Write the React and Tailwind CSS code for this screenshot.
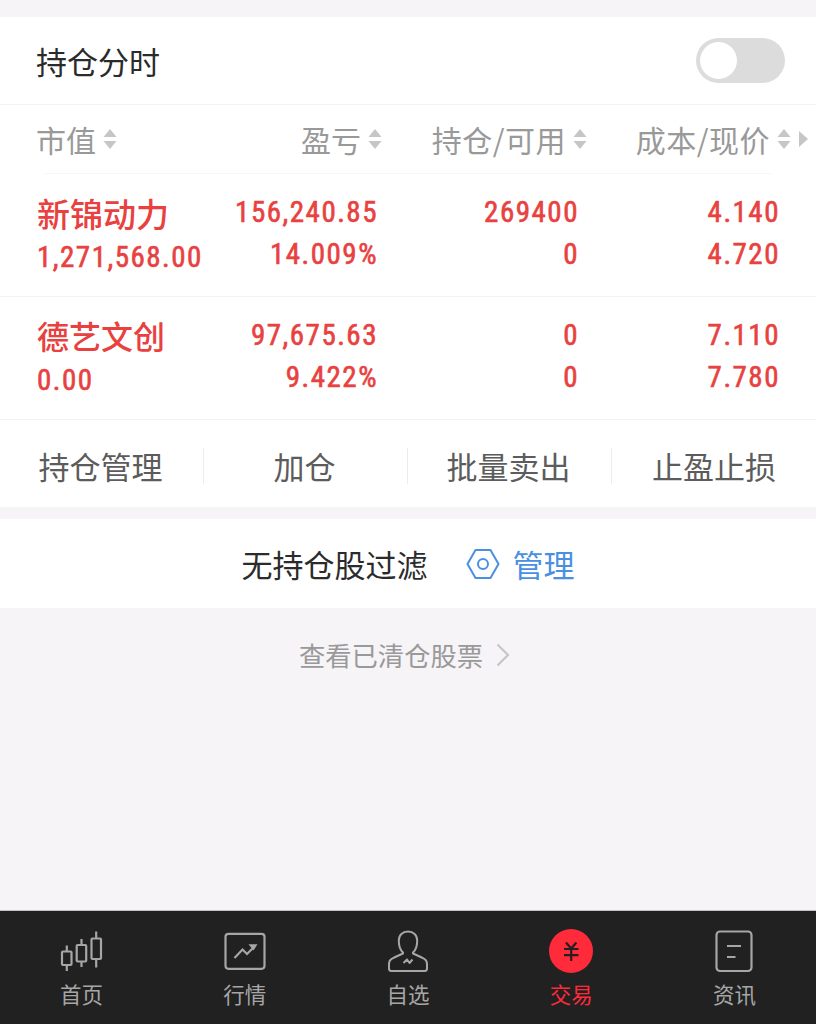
import React, { useState } from 'react';

const positions = [
  {
    name: '新锦动力',
    nameClass: 'text-[33px]',
    marketValue: '1,271,568.00',
    profit: '156,240.85',
    profitRate: '14.009%',
    held: '269400',
    available: '0',
    cost: '4.140',
    price: '4.720',
  },
  {
    name: '德艺文创',
    nameClass: 'text-[32px]',
    marketValue: '0.00',
    profit: '97,675.63',
    profitRate: '9.422%',
    held: '0',
    available: '0',
    cost: '7.110',
    price: '7.780',
  },
];

const actions = ['持仓管理', '加仓', '批量卖出', '止盈止损'];

const SortIcon = () => (
  <svg className="h-5 w-[14px] shrink-0" viewBox="0 0 14 20" fill="#c6c6c6">
    <path d="M7 0L13.5 8H.5z" />
    <path d="M7 20L.5 12h13z" />
  </svg>
);

const KlineIcon = () => (
  <svg width="44" height="44" viewBox="0 0 44 44" fill="none" stroke="#a6a6a6" strokeWidth="2.2">
    <rect x="2" y="22.5" width="9.5" height="13.5" rx="1" />
    <path d="M6.8 16.5v6M6.8 36v6" />
    <rect x="16.7" y="16" width="9.5" height="16.5" rx="1" />
    <path d="M21.5 10v6M21.5 32.5v5.5" />
    <rect x="31.5" y="9.5" width="9.5" height="20.5" rx="1" />
    <path d="M36.2 2.5v7M36.2 30v8.5" />
  </svg>
);

const MarketIcon = () => (
  <svg width="44" height="44" viewBox="0 0 44 44" fill="none" stroke="#a6a6a6" strokeWidth="2.2">
    <rect x="2.5" y="4.8" width="39" height="35" rx="3" />
    <path d="M11.5 29l8-8.5 4.5 4.5 7.5-7.5" />
    <path d="M25.5 15.2h9l-4 6.3z" fill="#a6a6a6" stroke="none" />
  </svg>
);

const UserIcon = () => (
  <svg width="44" height="44" viewBox="0 0 44 44" fill="none" stroke="#a6a6a6" strokeWidth="2" strokeLinejoin="round">
    <path d="M17 23.5C13.5 20.5 12.8 16 12.8 11.5c0-5.5 3.8-9 9.2-9s9.2 3.5 9.2 9c0 4.5-.7 9-4.2 12v1c4.5 2 8.5 3.7 11.5 5.5 1.8 1.1 2.5 2.8 2.5 5v4.5q0 2.5-2.5 2.5h-33Q3 42 3 39.5V35c0-2.2.7-3.9 2.5-5 3-1.8 7-3.5 11.5-5.5z" />
    <path d="M17.5 34l3.5-3.5 2.5 3.5 3-3.5" />
  </svg>
);

const TradeIcon = () => (
  <svg width="44" height="44" viewBox="0 0 44 44" fill="none" stroke="#212121" strokeWidth="2.2">
    <circle cx="22" cy="22" r="22" fill="#ff2a3a" stroke="none" />
    <path d="M17 13.5l5.2 6 5.2-6M15 20h14.5M15 26.2h14.5M22.2 19.5V32" />
  </svg>
);

const NewsIcon = () => (
  <svg width="44" height="44" viewBox="0 0 44 44" fill="none" stroke="#a6a6a6" strokeWidth="2.2">
    <rect x="4.5" y="2.5" width="35" height="39.5" rx="3.5" />
    <path d="M15 17h14M15 28h8.5" />
  </svg>
);

const tabs = [
  { label: '首页', icon: KlineIcon },
  { label: '行情', icon: MarketIcon },
  { label: '自选', icon: UserIcon },
  { label: '交易', icon: TradeIcon },
  { label: '资讯', icon: NewsIcon },
];

function HeaderCell({ label, className = '' }) {
  return (
    <div className="flex items-center justify-end gap-[7px] pb-px">
      <span className={`pt-px ${className}`}>{label}</span>
      <SortIcon />
    </div>
  );
}

function ValueCell({ top, bottom }) {
  return (
    <div className="pt-[17px] text-right">
      <div className="h-[42px] leading-[42px]">{top}</div>
      <div className="h-[42px] leading-[42px]">{bottom}</div>
    </div>
  );
}

function Switch({ on, onClick }) {
  return (
    <button
      className={
        on
          ? 'flex h-[45px] w-[89px] items-center justify-end rounded-full bg-[#e8413f] px-1'
          : 'flex h-[45px] w-[89px] items-center rounded-full bg-[#dcdcdc] px-1'
      }
      onClick={onClick}
    >
      <span className="block size-[37px] rounded-full bg-white" />
    </button>
  );
}

export default function App() {
  const [minuteChart, setMinuteChart] = useState(false);
  const [activeTab, setActiveTab] = useState('交易');

  return (
    <div className="flex h-screen w-full flex-col overflow-hidden bg-[#f6f4f6] font-['Noto_Sans_CJK_SC',sans-serif]">
      <div className="mt-[17px] flex h-[88px] shrink-0 items-center justify-between border-b border-[#f3f3f3] bg-white pr-[31px] pl-9">
        <span className="pt-0.5 text-[31px] text-[#2b2b2b]">持仓分时</span>
        <Switch on={minuteChart} onClick={() => setMinuteChart(!minuteChart)} />
      </div>

      <div className="grid h-[68px] shrink-0 grid-cols-[120px_262px_205px_204px_1fr] bg-white text-[30px] text-[#999]">
        <div className="flex items-center gap-[7px] pl-9">
          <span className="whitespace-nowrap">市值</span>
          <SortIcon />
        </div>
        <HeaderCell label="盈亏" />
        <HeaderCell label="持仓/可用" className="tracking-[0.5px]" />
        <HeaderCell label="成本/现价" className="tracking-[0.5px]" />
        <div className="flex items-center pl-2">
          <svg className="h-4 w-[9px]" viewBox="0 0 9 16" fill="#c6c6c6">
            <path d="M0 0l9 8-9 8z" />
          </svg>
        </div>
      </div>
      <div className="shrink-0 bg-white px-11">
        <div className="h-px bg-[#f7f7f7]" />
      </div>

      {positions.map((item) => (
        <div
          key={item.name}
          className="grid h-[123px] shrink-0 grid-cols-[200px_178px_201px_201px] border-b border-[#f3f3f3] bg-white font-['Roboto','Noto_Sans_CJK_SC',sans-serif] text-[29px] tracking-[1.5px] text-[#e8413f] [font-stretch:75%]"
        >
          <div className="pt-[21px] pl-[37px]">
            <div className={`h-[41px] leading-[41px] font-medium tracking-normal ${item.nameClass}`}>{item.name}</div>
            <div className="h-[42px] leading-[42px] [-webkit-text-stroke:0.6px]">{item.marketValue}</div>
          </div>
          <div className="contents [-webkit-text-stroke:0.6px]">
            <ValueCell top={item.profit} bottom={item.profitRate} />
            <ValueCell top={item.held} bottom={item.available} />
            <ValueCell top={item.cost} bottom={item.price} />
          </div>
        </div>
      ))}

      <div className="grid h-[87px] shrink-0 grid-cols-4 items-center bg-white pt-1 text-[31px] text-[#5c5c5c]">
        {actions.map((label) => (
          <button
            key={label}
            className="h-9 border-r border-[#ececec] pr-0.5 leading-9 last:border-r-0 last:pr-0"
          >
            {label}
          </button>
        ))}
      </div>

      <div className="mt-3 flex h-[89px] shrink-0 items-center justify-center bg-white text-[31px]">
        <span className="pt-px text-[#2b2b2b]">无持仓股过滤</span>
        <button className="ml-[38px] flex items-center text-[#4a90e2]">
          <svg className="mr-[13px]" width="34" height="32" viewBox="0 0 34 32" fill="none" stroke="#4a90e2" strokeWidth="2">
            <path d="M9.5 2h15L32.5 16l-8 14h-15l-8-14z" strokeLinejoin="round" />
            <circle cx="17" cy="16" r="5" />
          </svg>
          <span className="pt-0.5">管理</span>
        </button>
      </div>

      <button className="flex h-[93px] shrink-0 items-center justify-center pr-[7px] text-[26.3px] text-[#999]">
        查看已清仓股票
        <svg className="ml-[13px]" width="14" height="24" viewBox="0 0 14 24" fill="none" stroke="#c4c4c4" strokeWidth="2">
          <path d="M1.5 1.5L12 12 1.5 22.5" />
        </svg>
      </button>

      <nav className="mt-auto grid h-[114px] shrink-0 grid-cols-5 border-t border-[#bfc3c3] bg-[#212121] text-[21.5px] text-[#a6a6a6]">
        {tabs.map(({ label, icon: Icon }) => (
          <button
            key={label}
            className="flex flex-col items-center pt-[18px]"
            onClick={() => setActiveTab(label)}
          >
            <Icon />
            <span className={label === activeTab ? 'leading-[42px] text-[#ff2a3a]' : 'leading-[42px]'}>
              {label}
            </span>
          </button>
        ))}
      </nav>
    </div>
  );
}
